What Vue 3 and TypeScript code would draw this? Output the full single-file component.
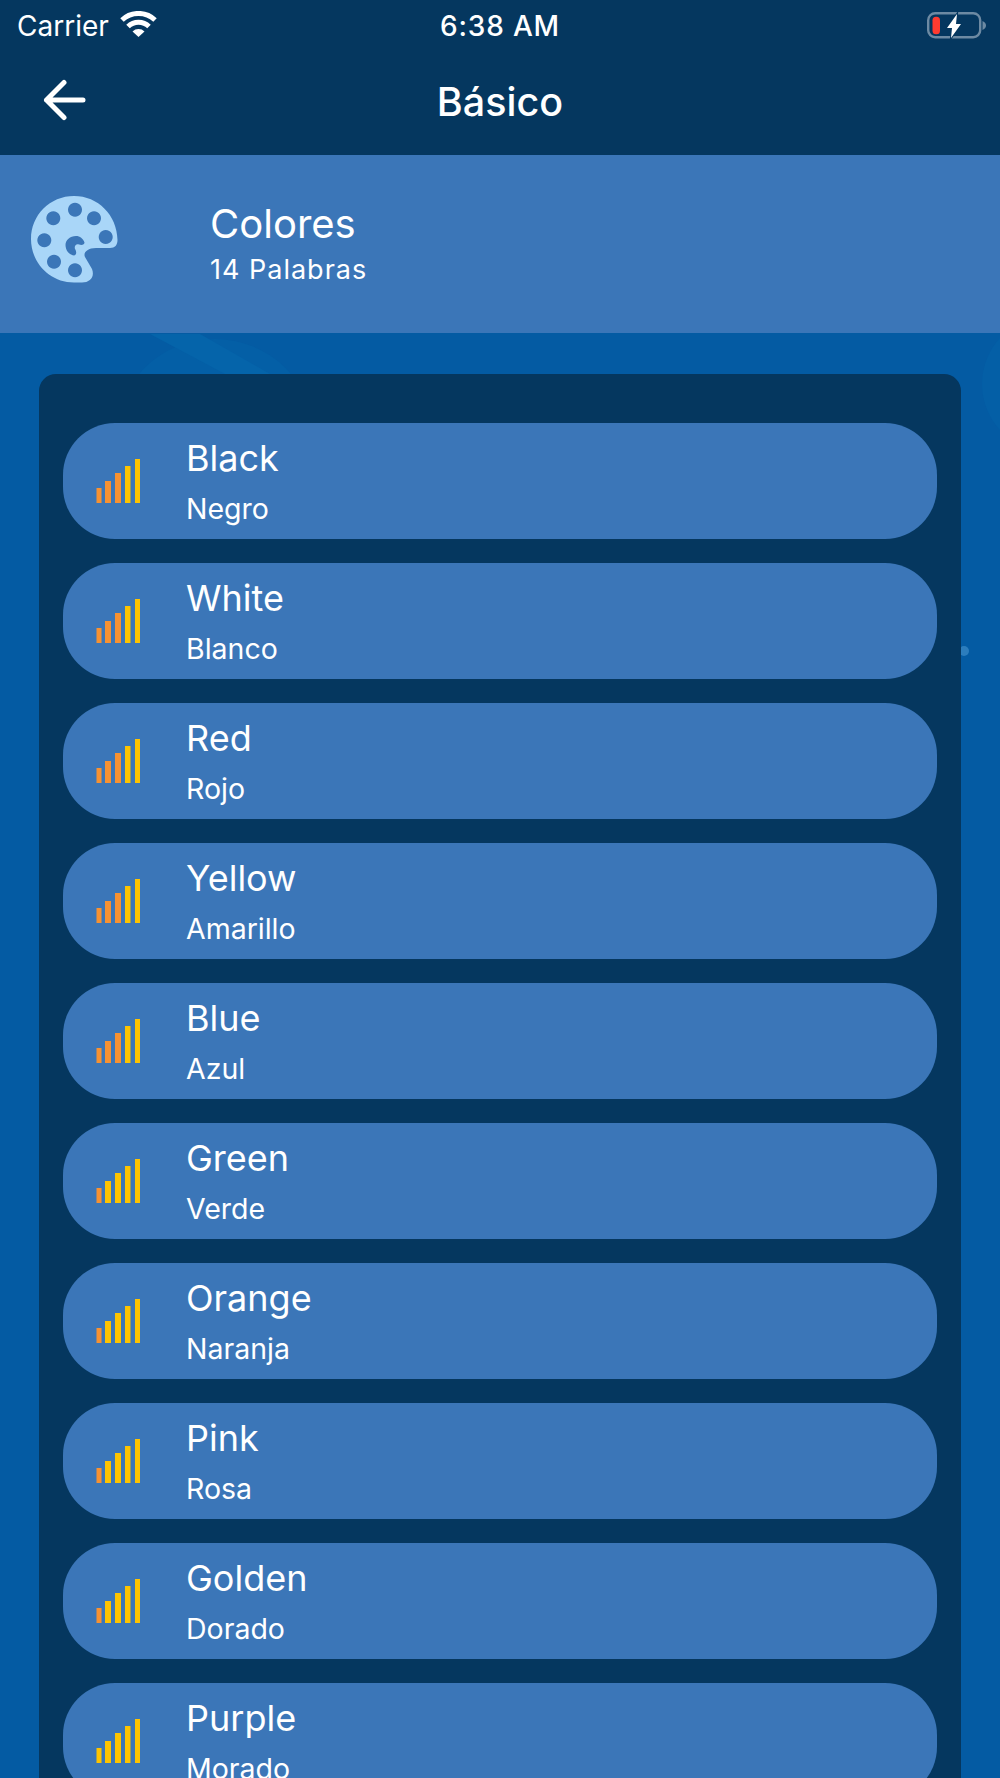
<script setup lang="ts">
interface Word {
  en: string
  es: string
  level: number // how many bars are still orange
}

const words: Word[] = [
  { en: 'Black', es: 'Negro', level: 3 },
  { en: 'White', es: 'Blanco', level: 3 },
  { en: 'Red', es: 'Rojo', level: 3 },
  { en: 'Yellow', es: 'Amarillo', level: 3 },
  { en: 'Blue', es: 'Azul', level: 3 },
  { en: 'Green', es: 'Verde', level: 1 },
  { en: 'Orange', es: 'Naranja', level: 1 },
  { en: 'Pink', es: 'Rosa', level: 1 },
  { en: 'Golden', es: 'Dorado', level: 1 },
  { en: 'Purple', es: 'Morado', level: 0 }
]

const bars = [
  { x: 0.5, w: 5, h: 15 },
  { x: 9, w: 6, h: 22 },
  { x: 19, w: 6, h: 30 },
  { x: 29, w: 5.5, h: 37 },
  { x: 39, w: 5, h: 44 }
]
</script>

<template>
  <div class="app">
    <svg class="decor" viewBox="0 0 1000 1444" aria-hidden="true">
      <circle class="decor-shape" cx="215" cy="105" r="100" />
      <path class="decor-line" d="M150 0 L225 40 L270 40 L200 0 Z" />
      <circle class="decor-shape" cx="1050" cy="50" r="68" />
      <ellipse class="decor-dot" cx="964" cy="317" rx="5" ry="5" />
    </svg>

    <header class="topbar">
      <div class="status">
        <div class="status-left">
          <span>Carrier</span>
          <svg class="wifi" viewBox="0 0 37 26">
            <path d="M2 9 A24 24 0 0 1 35 9" />
            <path d="M8 15.5 A15 15 0 0 1 29 15.5" />
            <path class="wifi-dot" d="M12.5 20.5 A8.5 8.5 0 0 1 24.5 20.5 L18.5 26 Z" />
          </svg>
        </div>
        <span class="time">6:38 AM</span>
        <div class="status-right">
          <svg class="battery" viewBox="0 0 60 28">
            <rect class="battery-case" x="1.2" y="1.2" width="52" height="24" rx="7" />
            <path class="battery-nub" d="M55.5 9 C58 10 59 12 59 13.5 C59 15 58 17 55.5 18 Z" />
            <rect class="battery-level" x="5.5" y="4.7" width="7.5" height="17.5" rx="3.5" />
            <path class="battery-bolt" d="M30 2 L20 16 L25 16 L24 26 L34 12 L29 12 Z" />
          </svg>
        </div>
      </div>
      <div class="nav">
        <svg class="back" viewBox="0 0 46 46">
          <path d="M41 21 H4.5 M22 3.5 L4.5 21 L22 38.5" />
        </svg>
        <h1 class="nav-title">Básico</h1>
      </div>
    </header>

    <section class="lesson">
      <svg class="palette" viewBox="0 0 90 90">
        <path
          fill-rule="evenodd"
          d="M44 1 C68 1 87 20 87.5 45 C87.5 50 85 53 80 53 L66 53 C57 53 53 58 55 62 L62 74 C65 82 60 87.5 52 87.5 L44 87.5 C20 87.5 1 68 1 44 C1 20 20 1 44 1 Z
             M45 7.7 a7 7 0 1 0 0.01 0 Z
             M23.3 16.3 a7 7 0 1 0 0.01 0 Z
             M64 16.3 a7 7 0 1 0 0.01 0 Z
             M75.7 35 a7 7 0 1 0 0.01 0 Z
             M14.3 38.3 a7 7 0 1 0 0.01 0 Z
             M24 59.7 a7 7 0 1 0 0.01 0 Z
             M45 68.3 a7 7 0 1 0 0.01 0 Z
             M46 41 C40 41 35.5 45 35.5 50 C35.5 55 39 60 44 60.5 C47 60 46.5 56 45 54 C44 51 46 48.5 49 49.5 C52 50.5 54.5 49.5 54.5 47.5 C53 43.5 50 41 46 41 Z"
        />
      </svg>
      <div class="lesson-text">
        <h2 class="lesson-title">Colores</h2>
        <p class="lesson-count">14 Palabras</p>
      </div>
    </section>

    <main class="content">
      <div class="card">
        <div v-for="word in words" :key="word.en" class="word">
          <svg class="level" viewBox="0 0 45 44">
            <rect
              v-for="(bar, i) in bars"
              :key="i"
              :class="i < word.level ? 'bar-orange' : 'bar-yellow'"
              :x="bar.x"
              :y="44 - bar.h"
              :width="bar.w"
              :height="bar.h"
            />
          </svg>
          <div class="word-text">
            <div class="word-en">{{ word.en }}</div>
            <div class="word-es">{{ word.es }}</div>
          </div>
        </div>
      </div>
    </main>
  </div>
</template>

<style>
html,
body {
  margin: 0;
  overflow: hidden;
}
</style>

<style scoped>
.app {
  position: relative;
  height: 1778px;
  overflow: hidden;
  display: flex;
  flex-direction: column;
  background: #045ba3;
  color: #fff;
  font-family: Inter, "Liberation Sans", sans-serif;
}

.decor {
  position: absolute;
  left: 0;
  top: 334px;
  width: 1000px;
  height: 1444px;
}

.decor-shape {
  fill: #045fa6;
}

.decor-line {
  fill: #0564aa;
}

.decor-dot {
  fill: #2c7dbd;
}

.topbar {
  position: relative;
  height: 155px;
  background: #05375f;
}

.status {
  height: 51px;
  display: grid;
  grid-template-columns: 1fr auto 1fr;
  align-items: center;
  padding: 0 15px;
  font-size: 28px;
}

.status-left {
  display: flex;
  align-items: center;
  gap: 11px;
  padding-left: 2px;
}

.wifi {
  width: 37px;
  height: 26px;
  margin-top: -3px;
}

.wifi path {
  fill: none;
  stroke: #fff;
  stroke-width: 5;
}

.wifi .wifi-dot {
  fill: #fff;
  stroke: none;
}

.time {
  font-weight: 500;
  letter-spacing: 0.8px;
}

.status-right {
  display: flex;
  justify-content: flex-end;
  margin-right: -2px;
}

.battery {
  width: 60px;
  height: 28px;
}

.battery-case {
  fill: none;
  stroke: #6d8aa3;
  stroke-width: 2.4;
}

.battery-nub {
  fill: #6d8aa3;
}

.battery-level {
  fill: #ff3b30;
}

.battery-bolt {
  fill: #fff;
  stroke: #05375f;
  stroke-width: 2;
  paint-order: stroke;
}

.nav {
  position: relative;
  height: 104px;
  display: flex;
  align-items: center;
  justify-content: center;
}

.back {
  position: absolute;
  left: 42px;
  top: 28px;
  width: 46px;
  height: 46px;
}

.back path {
  fill: none;
  stroke: #fff;
  stroke-width: 5;
  stroke-linecap: round;
  stroke-linejoin: round;
}

.nav-title {
  margin: 0 0 2px;
  font-size: 39.5px;
  font-weight: 550;
}

.lesson {
  position: relative;
  height: 178px;
  flex: none;
  display: flex;
  align-items: center;
  background: #3b76b8;
}

.palette {
  width: 90px;
  height: 90px;
  margin: 0 0 8px 30px;
  flex: none;
  fill: #a9d6f8;
}

.lesson-text {
  margin-left: 90px;
  padding-top: 2px;
}

.lesson-title {
  margin: 0;
  font-size: 40px;
  font-weight: 400;
  line-height: 48px;
}

.lesson-count {
  margin: 2px 0 0;
  font-size: 27px;
  line-height: 40px;
  letter-spacing: 1px;
}

.content {
  position: relative;
  flex: 1;
  min-height: 0;
  padding: 41px 39px 0;
}

.card {
  height: 100%;
  box-sizing: border-box;
  padding: 49px 24px 0;
  display: flex;
  flex-direction: column;
  gap: 24px;
  background: #05375f;
  border-radius: 17px 17px 0 0;
}

.word {
  flex: none;
  height: 116px;
  display: flex;
  align-items: center;
  background: #3b76b8;
  border-radius: 52px;
}

.level {
  width: 45px;
  height: 44px;
  margin: 0 0 0 33px;
  flex: none;
}

.bar-orange {
  fill: #f79232;
}

.bar-yellow {
  fill: #fec400;
}

.word-text {
  margin-left: 45px;
  padding-top: 2px;
}

.word-en {
  font-size: 36px;
  line-height: 40px;
  margin-bottom: 14px;
}

.word-es {
  font-size: 28.5px;
  line-height: 34px;
}
</style>
